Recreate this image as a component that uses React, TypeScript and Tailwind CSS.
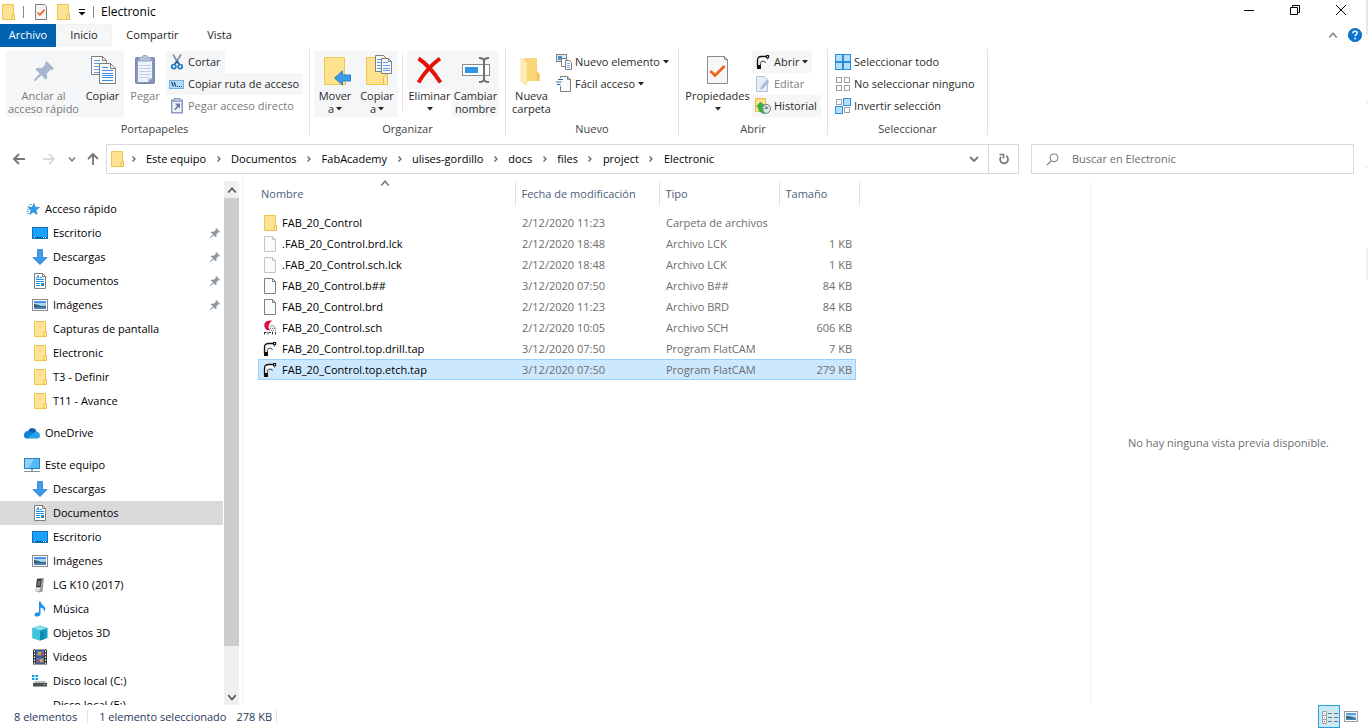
import React from "react";

type IconProps = { className?: string };

function FolderIcon({ className = "size-4" }: IconProps) {
  return (
    <svg viewBox="0 0 16 16" className={className} aria-hidden="true">
      <path d="M2.5.5h11v10h1v5h-12z" fill="#ffe394" stroke="#efc84a" />
      <path d="M12.5 10.5h2v5h-2.500v-4z" fill="#ffe9a8" stroke="#e9c046" />
    </svg>
  );
}

function PageIcon({ className = "size-4", stroke = "#808080" }: IconProps & { stroke?: string }) {
  return (
    <svg viewBox="0 0 16 16" className={className} aria-hidden="true">
      <path d="M2.5.5h8l3 3v12h-11z" fill="#fafafa" stroke={stroke} />
      <path d="M10.500.5v3h3" fill="none" stroke={stroke} />
    </svg>
  );
}

function CheckPageIcon({ className = "size-4" }: IconProps) {
  return (
    <svg viewBox="0 0 16 16" className={className} aria-hidden="true">
      <path d="M2.500.5h9l2 2v13h-11z" fill="#f5f5f5" stroke="#7f7f7f" />
      <path d="M4.500 8.500l2.300 2.300 4.700-5" fill="none" stroke="#f2641a" strokeWidth="1.700" />
    </svg>
  );
}

function PinIcon({ className = "size-3" }: IconProps) {
  return (
    <svg viewBox="0 0 16 16" className={className} aria-hidden="true">
      <path d="M10 0l6 6-1.600 1.200-1-.4-3.200 3.200.4 3.400-1.400 1.400-3.400-3.400L1.600 15.600 0 16l.4-1.600L4.600 10.200 1.200 6.800l1.400-1.400 3.400.4 3.200-3.200-.4-1z" fill="currentColor" />
    </svg>
  );
}

function CopyIcon() {
  return (
    <svg viewBox="0 0 32 32" className="size-8" aria-hidden="true">
      <path d="M4.500 1.500h11l4 4v14h-15z" fill="#fafafa" stroke="#7f7f7f" />
      <path d="M15.500 1.500v4h4" fill="none" stroke="#7f7f7f" />
      <path d="M7 5.500h6M7 8.500h10M7 11.500h5M7 14.500h5M7 17.500h5" stroke="#5a9ce8" />
      <path d="M12.500 8.500h11l5 5v15h-16z" fill="#fafafa" stroke="#7f7f7f" />
      <path d="M23.500 8.500v5h5" fill="none" stroke="#7f7f7f" />
      <path d="M15 12.500h6M15 15.500h11M15 18.500h11M15 20.500h11M15 22.500h11M15 25.500h11" stroke="#3a8ee6" />
    </svg>
  );
}

function PasteIcon() {
  return (
    <svg viewBox="0 0 32 32" className="size-8" aria-hidden="true">
      <rect x="6.500" y="2.500" width="19" height="26" rx="1" fill="#8794bb" stroke="#7a88b0" />
      <path d="M9 6h14v17l-4 4H9z" fill="#eef2fa" />
      <path d="M10 10.500h12M10 13.500h12M10 16.500h12M10 19.500h12M10 22.500h9" stroke="#c3cde4" />
      <path d="M10 6V2.500h3c0-3 6-3 6 0h3V6z" fill="#b6c1da" stroke="#93a0c2" />
      <path d="M19 27v-4h4z" fill="#b9c4de" />
    </svg>
  );
}

function ScissorsIcon() {
  return (
    <svg viewBox="0 0 16 16" className="size-4" aria-hidden="true">
      <path d="M4 .5l5.500 9M12 .5l-5.500 9" stroke="#8795a8" strokeWidth="1.800" />
      <path d="M8 7l2.500 3.500M8 7l-2.500 3.500" stroke="#1f5f9e" strokeWidth="1.500" />
      <circle cx="4.800" cy="12.600" r="2.100" fill="none" stroke="#1f78c0" strokeWidth="1.700" />
      <circle cx="11.200" cy="12.600" r="2.100" fill="none" stroke="#1f78c0" strokeWidth="1.700" />
    </svg>
  );
}

function PathIcon() {
  return (
    <svg viewBox="0 0 16 16" className="size-4" aria-hidden="true">
      <rect x=".5" y="4.500" width="14" height="8" fill="#b3dcfa" stroke="#74aede" />
      <path d="M2.500 6l2 4.500M5 6l2 4.500" stroke="#16406e" strokeWidth="1.200" />
      <path d="M8 10.500h1M10 10.500h1M12 10.500h1" stroke="#16406e" />
    </svg>
  );
}

function ShortcutIcon() {
  return (
    <svg viewBox="0 0 16 16" className="size-4" aria-hidden="true">
      <rect x="2" y="1.500" width="12" height="14" fill="#8c99be" />
      <rect x="3.500" y="3.500" width="9" height="10.500" fill="#eef2fa" />
      <path d="M5 .5h6v3H5z" fill="#b6c1da" stroke="#93a0c2" />
      <path d="M6 5.500h5v5L9.300 9l-2.800 3.200-1.200-1.200L8 8z" fill="#6b7aa5" />
    </svg>
  );
}

function BigFolder() {
  return (
    <>
      <path d="M5.500 2.500h20v18h1v9h-21z" fill="#ffe28e" stroke="#eec84c" />
      <path d="M25.500 19.500h1v10h-4v-8z" fill="#fde9a9" stroke="#e9c046" />
    </>
  );
}

function MoveToIcon() {
  return (
    <svg viewBox="0 0 32 32" className="size-8" aria-hidden="true">
      <BigFolder />
      <path d="M15.500 23l8-7v4h8v6h-8v4z" fill="#3b9be8" stroke="#2c7ec8" />
    </svg>
  );
}

function CopyToIcon() {
  return (
    <svg viewBox="0 0 32 32" className="size-8" aria-hidden="true">
      <BigFolder />
      <path d="M14.500.5h8l3 3v13h-11z" fill="#fafafa" stroke="#7f7f7f" />
      <path d="M20.500 3.500h7l3 3v12h-10z" fill="#fafafa" stroke="#7f7f7f" />
      <path d="M27.500 3.500v3h3" fill="none" stroke="#7f7f7f" />
      <path d="M16 4.500h4M16 7.500h4M16 10.500h4M16 13.500h4M22 7.500h5M22 10.500h7M22 13.500h7M22 15.500h7" stroke="#5a9ce8" />
    </svg>
  );
}

function DeleteIcon() {
  return (
    <svg viewBox="0 0 32 32" className="size-8" aria-hidden="true">
      <path d="M4.500 3.500Q16 11 26.500 27.500M26 3.500Q13 13 4.500 27.500" fill="none" stroke="#e3120b" strokeWidth="4" />
    </svg>
  );
}

function RenameIcon() {
  return (
    <svg viewBox="0 0 32 32" className="size-8" aria-hidden="true">
      <rect x="2.500" y="9.500" width="27" height="11" fill="#fff" stroke="#8a8a8a" />
      <rect x="5" y="12" width="13" height="6" fill="#3195e6" />
      <path d="M24 5v21" stroke="#707070" strokeWidth="2" />
      <path d="M19 3q5 0 5 3 0-3 5-3M19 27q5 0 5-3 0 3 5 3" fill="none" stroke="#707070" strokeWidth="2" />
    </svg>
  );
}

function NewFolderIcon() {
  return (
    <svg viewBox="0 0 32 32" className="size-8" aria-hidden="true">
      <path d="M8 3h13v13l2.500 2.500V26H8z" fill="#f8d679" />
      <path d="M20.500 17.500l3 1.500v7h-3z" fill="#f2c65c" />
      <path d="M5 3l6 4.500V29l-1 1-5-4z" fill="#ffebb0" stroke="#f3d686" strokeWidth=".6" />
    </svg>
  );
}

function NewItemIcon() {
  return (
    <svg viewBox="0 0 16 16" className="size-4" aria-hidden="true">
      <rect x=".5" y=".5" width="10" height="7" fill="#d8ebf8" stroke="#7f7f7f" />
      <path d="M2 2h4v4H2z" fill="#4d93c9" />
      <path d="M5.500 4.500h5v8h-5z" fill="#fff" stroke="#7f7f7f" />
      <path d="M9.500 6.500h4l2 2v7h-6z" fill="#fafafa" stroke="#7f7f7f" />
      <path d="M11 9.500h3M11 11.500h3M11 13.500h3" stroke="#7db1e6" />
    </svg>
  );
}

function EasyAccessIcon() {
  return (
    <svg viewBox="0 0 16 16" className="size-4" aria-hidden="true">
      <path d="M4.500.5h7l3 3v12h-10z" fill="#fafafa" stroke="#7f7f7f" />
      <path d="M11.500.5v3h3" fill="none" stroke="#7f7f7f" />
      <path d="M3 2h3v8H3z" fill="#fff" />
      <path d="M2 3.500h5M0 6h5.500M1 8.500h3.500" stroke="#1f6fb8" strokeWidth="1.200" />
    </svg>
  );
}

function PropertiesIcon() {
  return (
    <svg viewBox="0 0 32 32" className="size-8" aria-hidden="true">
      <path d="M5.500 1.500h17l3 3v24h-20z" fill="#f7f7f7" stroke="#8a8a8a" />
      <path d="M22.500 1.500v3h3" fill="none" stroke="#8a8a8a" />
      <path d="M8.500 16l4.500 4.500L22.500 11" fill="none" stroke="#f2641a" strokeWidth="2.800" />
    </svg>
  );
}

function FlatcamIcon() {
  return (
    <svg viewBox="0 0 16 16" className="size-4" aria-hidden="true">
      <path d="M3 5q.5-2 3-2.500h5V6L8 6 5.500 8v4H3z" fill="#fff" />
      <path d="M2.500 13V6q0-3.500 4-3.500H12" fill="none" stroke="#111" strokeWidth="1.300" />
      <path d="M5.500 12V9.500q0-2.500 2.500-2.500 2 0 2.500 2" fill="none" stroke="#444" />
      <path d="M4 6v5" stroke="#c4c4c4" />
      <path d="M2 11h4v4H2z" fill="#111" />
      <path d="M11.600 1.500h2v2.200h-2z" fill="#fff" stroke="#111" strokeWidth="1.100" />
      <path d="M12.500 4v1.500" stroke="#555" />
    </svg>
  );
}

function EditIcon() {
  return (
    <svg viewBox="0 0 16 16" className="size-4" aria-hidden="true">
      <path d="M1.500.5h8l3 3v12h-11z" fill="#e8eef8" stroke="#b2c0da" />
      <path d="M5 14l1-3.500 6-7 2.500 2-6.500 7z" fill="#a8bddb" />
    </svg>
  );
}

function HistoryIcon() {
  return (
    <svg viewBox="0 0 16 16" className="size-4" aria-hidden="true">
      <path d="M.5.500h10v13H.5z" fill="#ffe28e" stroke="#e9c046" />
      <circle cx="11" cy="10.800" r="4.500" fill="#e6e6e6" stroke="#7c7c7c" />
      <path d="M11 8v3l2-1.500M8.500 10.500h1" fill="none" stroke="#555" />
      <path d="M1.500 8.500L5.500 4l4 4H7.500q-.5 4 2.500 7.500Q3 15 3.200 8.500z" fill="#35b34a" stroke="#1f8a35" strokeWidth=".5" />
    </svg>
  );
}

function SelectIcon({ on }: { on: [boolean, boolean, boolean, boolean] }) {
  const cells = [[0, 0], [1, 0], [0, 1], [1, 1]];
  return (
    <svg viewBox="0 0 16 16" className="size-4" aria-hidden="true">
      {cells.map(([cx, cy], i) => {
        const big = on[i];
        return (
          <rect
            key={i}
            x={cx * 8 + (big ? 0.5 : 1.5)}
            y={cy * 8 + (big ? 0.5 : 1.5)}
            width={big ? 7 : 5}
            height={big ? 7 : 5}
            fill={big ? "#b5defa" : "#fff"}
            stroke={big ? "#2a8ee0" : "#a0a0a0"}
          />
        );
      })}
    </svg>
  );
}

function StarIcon() {
  return (
    <svg viewBox="0 0 16 16" className="size-4" aria-hidden="true">
      <path d="M10 2.500l1.200 3.800 4.300.2-3.500 2.500 1.100 4.500-3.600-2.500-3.800 2.500 1.500-4.500L4 6.500l4.200-.2z" fill="#2d9be8" stroke="#1c7fc9" strokeWidth=".6" />
      <path d="M5 3.500h3M3.500 5.500h2M3 8.500h2.500M2 10.500h3M3 12.500h2" stroke="#72bdf0" />
    </svg>
  );
}

function DesktopIcon() {
  return (
    <svg viewBox="0 0 16 16" className="size-4" aria-hidden="true">
      <rect x=".5" y="2.500" width="15" height="11" fill="#1ba1fb" stroke="#1273bd" />
      <path d="M1 12.500h14" stroke="#0b5d9e" />
      <path d="M2 12.500h1M11 12.500h1M13 12.500h1" stroke="#fff" />
    </svg>
  );
}

function DownloadIcon() {
  return (
    <svg viewBox="0 0 16 16" className="size-4" aria-hidden="true">
      <path d="M5.500.5h5v8h4.700L8 15.500.8 8.500h4.700z" fill="#3f9be9" stroke="#2b7ccb" strokeWidth=".8" />
    </svg>
  );
}

function DocumentIcon() {
  return (
    <svg viewBox="0 0 16 16" className="size-4" aria-hidden="true">
      <path d="M2.500.5h8l3 3v12h-11z" fill="#fdfdfd" stroke="#7d7d7d" />
      <path d="M10.500.5v3h3" fill="none" stroke="#7d7d7d" />
      <path d="M4.500 5.500L6 2.500l1 3" fill="none" stroke="#0a8fe6" />
      <path d="M8 4.500h2M4 6.500h8M4 8.500h8M4 10.500h4M4 12.500h4" stroke="#1a97e8" />
      <path d="M9 10h3v3H9z" fill="#2d86c4" />
    </svg>
  );
}

function PictureIcon() {
  return (
    <svg viewBox="0 0 16 16" className="size-4" aria-hidden="true">
      <rect x=".5" y="2.500" width="15" height="11" fill="#fff" stroke="#8c8c8c" />
      <path d="M2 4h12v8H2z" fill="#a6d2f5" />
      <path d="M2 4h12v2H2z" fill="#4c93e8" />
      <path d="M2 7q4 .5 7 2h5v1H2z" fill="#2f6468" />
      <path d="M2 10h12v2H2z" fill="#4a86ba" />
    </svg>
  );
}

function CloudIcon() {
  return (
    <svg viewBox="0 0 16 16" className="size-4" aria-hidden="true">
      <path d="M4 6q2-4 6-2.500 2 .6 2.500 3L9 9z" fill="#0a5eb5" />
      <path d="M0 10.500q0-4.300 4.200-4.500 2-.2 4 1.300L12 9l-8 4.500H3q-3 0-3-3z" fill="#1380d8" />
      <path d="M3 13.500L10.500 7.500Q12 6 14 7q2 1.200 2 3.500 0 3-3 3z" fill="#28a0ea" />
    </svg>
  );
}

function ComputerIcon() {
  return (
    <svg viewBox="0 0 16 16" className="size-4" aria-hidden="true">
      <rect x=".5" y="1.500" width="15" height="10" fill="#54b9f7" stroke="#2e7fb8" />
      <path d="M1 2h9L5 11H1z" fill="#8ad2fb" />
      <path d="M7 12h2v2H7z" fill="#89a9bd" />
      <path d="M0 14.500h16" stroke="#7994a6" />
    </svg>
  );
}

function PhoneIcon() {
  return (
    <svg viewBox="0 0 16 16" className="size-4" aria-hidden="true">
      <path d="M5 1.500L12 1l-1.500 13.500-3 1L3.500 14z" fill="#9c9c9c" />
      <path d="M5 2l4.800-.3L8.500 10H4.200z" fill="#3c3c3c" />
      <path d="M6 4l2.500-.2L8 8.500H5.200z" fill="#777" />
      <path d="M4 10.800h4l-.6 3.400-3-.6z" fill="#e6e6e6" />
    </svg>
  );
}

function MusicIcon() {
  return (
    <svg viewBox="0 0 16 16" className="size-4" aria-hidden="true">
      <path d="M7 .5h1.500q.5 2.500 3 4.200 3 2.500 1 6.300.4-3-4-4.500V13q-.5 2.500-3.500 2.500-2.800 0-2.500-2 .5-2.300 4.500-2.200z" fill="#1c93ea" />
    </svg>
  );
}

function CubeIcon() {
  return (
    <svg viewBox="0 0 16 16" className="size-4" aria-hidden="true">
      <path d="M8 .5l7.500 2.500v10L8 15.500.5 13V3z" fill="#1a9cc2" />
      <path d="M8 .5L15.500 3 8 5.500.5 3z" fill="#83e2ec" />
      <path d="M.5 3L8 5.500v10L.5 13z" fill="#3cc5da" />
      <path d="M8 5.500l4.500 3v5.500L8 15.500z" fill="#128bb4" />
    </svg>
  );
}

function VideoIcon() {
  return (
    <svg viewBox="0 0 16 16" className="size-4" aria-hidden="true">
      <path d="M1 .5h14v15H1z" fill="#3b3b3b" />
      <path d="M4 1.500h8v6H4zM4 8.500h8v6H4z" fill="#4878c6" />
      <path d="M6 3h3v3H6zM8 10h3v3H8z" fill="#e3a03a" />
      <path d="M9 4h2v3H9zM5 11h2v3H5z" fill="#c74438" />
      <path d="M2.500 1.500v14M13.500 1.500v14" stroke="#f3f3f3" strokeDasharray="1.500 1.500" />
    </svg>
  );
}

function DriveIcon({ system = true }: { system?: boolean }) {
  return (
    <svg viewBox="0 0 16 16" className="size-4" aria-hidden="true">
      {system && <path d="M0 2h2.500v2H0zM3.500 2H6v2H3.500zM0 5h2.500v2H0zM3.500 5H6v2H3.500z" fill="#17a0e8" />}
      <path d="M3 8h10l1.500 2.500H1.500z" fill="#bdbdbd" />
      <path d="M1 10h14v3.500H1z" fill="#4b4f52" />
      <path d="M11.500 11.500h2" stroke="#5fe06a" />
    </svg>
  );
}

function EagleIcon() {
  return (
    <svg viewBox="0 0 16 16" className="size-4" aria-hidden="true">
      <path d="M10 .5Q4 0 2.500 3.500 1.500 7.500 5 10L8 10.500Q6 8 6.500 5.500 7.500 3 10 .5z" fill="#dc0f38" />
      <path d="M7 6.500q3-2 5.500 0l1.200 3" fill="none" stroke="#9c9c9c" />
      <path d="M8 8.500h5M9 10.500h5" stroke="#7b7b7b" strokeDasharray="1 1" />
      <path d="M2.500 12v2.500M3 12.500h1.500M6 12v2.500M7 12.500h2M10.500 11.500v3M13.500 12v2.500" stroke="#333" />
    </svg>
  );
}

function Chevron({ dir, className = "size-2" }: { dir: "up" | "down" | "right"; className?: string }) {
  const d = { up: "M1 6l3-3.500L7 6", down: "M1 2.500L4 6l3-3.500", right: "M2.500 1.500L5 4 2.500 6.500" }[dir];
  return (
    <svg viewBox="0 0 8 8" className={className} aria-hidden="true">
      <path d={d} fill="none" stroke="currentColor" strokeWidth="1.300" />
    </svg>
  );
}

function Caret() {
  return (
    <svg viewBox="0 0 6 4" className="inline-block h-1 w-1.5 shrink-0 text-[#222]" aria-hidden="true">
      <path d="M0 0h6L3 3.500z" fill="currentColor" />
    </svg>
  );
}

function BigButton({
  icon, lines, className, disabled, caret,
}: { icon: React.ReactNode; lines: string[]; className: string; disabled?: boolean; caret?: boolean }) {
  return (
    <button
      type="button"
      disabled={disabled}
      className={`flex h-[66px] shrink-0 flex-col items-center whitespace-nowrap pt-1 leading-[13px] ${disabled ? "text-[#7c7c7c]" : "text-[#2b2b2b]"} ${className}`}
    >
      <span className="mb-0.5 block">{icon}</span>
      {lines.map((line, i) => (
        <span key={i} className="flex h-[13px] items-center gap-0.5">
          {line}
          {caret && i === lines.length - 1 && <Caret />}
        </span>
      ))}
    </button>
  );
}

function SmallButton({
  icon, label, active, disabled, caret,
}: { icon: React.ReactNode; label: string; active?: boolean; disabled?: boolean; caret?: boolean }) {
  return (
    <button
      type="button"
      disabled={disabled}
      className={`flex h-[22px] items-center gap-[3px] whitespace-nowrap pl-[3px] pr-1 ${active ? "bg-[#f5f6f7]" : ""} ${disabled ? "text-[#7c7c7c]" : "text-[#2b2b2b]"}`}
    >
      {icon}
      {label}
      {caret && <span className="flex items-center"><Caret /></span>}
    </button>
  );
}

function Group({ label, className, children }: { label: string; className: string; children: React.ReactNode }) {
  return (
    <section aria-label={label} className={`flex h-[86px] shrink-0 flex-col border-r border-[#e2e3e4] pt-0.5 ${className}`}>
      <div className="flex h-[66px] pl-1">{children}</div>
      <div className="mt-1 text-center leading-4 text-[#444]">{label}</div>
    </section>
  );
}

type Node = { label: string; icon: React.ReactNode; root?: boolean; pin?: boolean; selected?: boolean };

const tree: Node[][] = [
  [
    { label: "Acceso rápido", icon: <StarIcon />, root: true },
    { label: "Escritorio", icon: <DesktopIcon />, pin: true },
    { label: "Descargas", icon: <DownloadIcon />, pin: true },
    { label: "Documentos", icon: <DocumentIcon />, pin: true },
    { label: "Imágenes", icon: <PictureIcon />, pin: true },
    { label: "Capturas de pantalla", icon: <FolderIcon /> },
    { label: "Electronic", icon: <FolderIcon /> },
    { label: "T3 - Definir", icon: <FolderIcon /> },
    { label: "T11 - Avance", icon: <FolderIcon /> },
  ],
  [{ label: "OneDrive", icon: <CloudIcon />, root: true }],
  [
    { label: "Este equipo", icon: <ComputerIcon />, root: true },
    { label: "Descargas", icon: <DownloadIcon /> },
    { label: "Documentos", icon: <DocumentIcon />, selected: true },
    { label: "Escritorio", icon: <DesktopIcon /> },
    { label: "Imágenes", icon: <PictureIcon /> },
    { label: "LG K10 (2017)", icon: <PhoneIcon /> },
    { label: "Música", icon: <MusicIcon /> },
    { label: "Objetos 3D", icon: <CubeIcon /> },
    { label: "Videos", icon: <VideoIcon /> },
    { label: "Disco local (C:)", icon: <DriveIcon /> },
    { label: "Disco local (E:)", icon: <DriveIcon system={false} /> },
  ],
];

const files = [
  { name: "FAB_20_Control", date: "2/12/2020 11:23", type: "Carpeta de archivos", size: "", icon: <FolderIcon /> },
  { name: ".FAB_20_Control.brd.lck", date: "2/12/2020 18:48", type: "Archivo LCK", size: "1 KB", icon: <PageIcon stroke="#c4c4c4" /> },
  { name: ".FAB_20_Control.sch.lck", date: "2/12/2020 18:48", type: "Archivo LCK", size: "1 KB", icon: <PageIcon stroke="#c4c4c4" /> },
  { name: "FAB_20_Control.b##", date: "3/12/2020 07:50", type: "Archivo B##", size: "84 KB", icon: <PageIcon /> },
  { name: "FAB_20_Control.brd", date: "2/12/2020 11:23", type: "Archivo BRD", size: "84 KB", icon: <PageIcon /> },
  { name: "FAB_20_Control.sch", date: "2/12/2020 10:05", type: "Archivo SCH", size: "606 KB", icon: <EagleIcon /> },
  { name: "FAB_20_Control.top.drill.tap", date: "3/12/2020 07:50", type: "Program FlatCAM", size: "7 KB", icon: <FlatcamIcon /> },
  { name: "FAB_20_Control.top.etch.tap", date: "3/12/2020 07:50", type: "Program FlatCAM", size: "279 KB", icon: <FlatcamIcon />, selected: true },
];

const crumbs = ["Este equipo", "Documentos", "FabAcademy", "ulises-gordillo", "docs", "files", "project", "Electronic"];

function TitleBar() {
  return (
    <header className="flex h-6 shrink-0 items-center text-black">
      <FolderIcon />
      <span className="ml-[7px] h-3 w-px bg-[#8a8a8a]" />
      <button type="button" aria-label="Propiedades" className="ml-[9px]"><CheckPageIcon /></button>
      <button type="button" aria-label="Nueva carpeta" className="ml-1.5"><FolderIcon /></button>
      <button type="button" aria-label="Personalizar barra" className="ml-[7px]">
        <svg viewBox="0 0 8 8" className="size-2" aria-hidden="true">
          <path d="M1 1.500h6" stroke="#111" />
          <path d="M.5 4h7L4 7.500z" fill="#111" />
        </svg>
      </button>
      <span className="ml-[7px] h-3 w-px bg-[#8a8a8a]" />
      <h1 className="ml-[7px] text-xs">Electronic</h1>
      <div className="ml-auto mr-0.5 flex items-start self-stretch">
        <button type="button" aria-label="Minimizar" className="flex h-5 w-[46px] items-center justify-center">
          <svg viewBox="0 0 10 10" className="size-2.5" aria-hidden="true"><path d="M0 5.500h10" stroke="#000" /></svg>
        </button>
        <button type="button" aria-label="Restaurar" className="flex h-5 w-[46px] items-center justify-center">
          <svg viewBox="0 0 10 10" className="size-2.5" aria-hidden="true">
            <path d="M.5 2.500h7v7h-7zM2.500 2.500v-2h7v7h-2" fill="none" stroke="#000" />
          </svg>
        </button>
        <button type="button" aria-label="Cerrar" className="flex h-5 w-[46px] items-center justify-center">
          <svg viewBox="0 0 10 10" className="size-2.5" aria-hidden="true"><path d="M0 0l10 10M10 0L0 10" stroke="#000" /></svg>
        </button>
      </div>
    </header>
  );
}

function Tabs() {
  return (
    <nav className="flex h-[23px] shrink-0 items-stretch text-[#222]">
      <button type="button" className="w-14 bg-[#0063b1] pb-0.5 text-white">Archivo</button>
      <button type="button" className="w-14 border-x border-t border-[#f0f1f2] bg-[#f5f6f7] pb-0.5">Inicio</button>
      <button type="button" className="w-[81px] pb-0.5">Compartir</button>
      <button type="button" className="w-[53px] pb-0.5">Vista</button>
      <div className="ml-auto flex items-center gap-2.5 pb-0.5 pr-1">
        <button type="button" aria-label="Minimizar la cinta" className="text-[#8a8a8a]"><Chevron dir="up" className="size-2.5" /></button>
        <button type="button" aria-label="Ayuda">
          <svg viewBox="0 0 14 14" className="size-3.5" aria-hidden="true">
            <circle cx="7" cy="7" r="6.600" fill="#0a76d3" stroke="#0a5aa5" strokeWidth=".8" />
            <path d="M4.800 5.300q.1-2 2.200-2t2.200 1.700q0 1-1.200 1.700-.9.500-.9 1.600" fill="none" stroke="#fff" strokeWidth="1.500" />
            <path d="M6.200 9.700h1.700v1.500H6.200z" fill="#fff" />
          </svg>
        </button>
      </div>
    </nav>
  );
}

function Ribbon() {
  return (
    <div className="flex h-[97px] shrink-0 pt-0.5">
      <Group label="Portapapeles" className="w-[310px]">
        <BigButton icon={<span className="flex size-8 items-center justify-center text-[#a7b6cc]"><PinIcon className="size-5" /></span>} lines={["Anclar al", "acceso rápido"]} className="ml-0.5 w-[75px] bg-[#f5f6f7]" disabled />
        <BigButton icon={<CopyIcon />} lines={["Copiar"]} className="w-[43px] bg-[#f5f6f7]" />
        <BigButton icon={<PasteIcon />} lines={["Pegar"]} className="w-[42px]" disabled />
        <div className="flex flex-col items-start">
          <SmallButton icon={<ScissorsIcon />} label="Cortar" active />
          <SmallButton icon={<PathIcon />} label="Copiar ruta de acceso" active />
          <SmallButton icon={<ShortcutIcon />} label="Pegar acceso directo" disabled />
        </div>
      </Group>
      <Group label="Organizar" className="w-[196px]">
        <BigButton icon={<MoveToIcon />} lines={["Mover", "a"]} className="w-[42px] bg-[#f5f6f7]" caret />
        <BigButton icon={<CopyToIcon />} lines={["Copiar", "a"]} className="w-[42px] bg-[#f5f6f7]" caret />
        <span className="mx-1 mt-1 h-14 w-px shrink-0 bg-[#e2e3e4]" />
        <BigButton icon={<DeleteIcon />} lines={["Eliminar", ""]} className="w-[45px] bg-[linear-gradient(#f5f6f7_38px,transparent_38px)]" caret />
        <BigButton icon={<RenameIcon />} lines={["Cambiar", "nombre"]} className="w-[47px] bg-[#f5f6f7]" />
      </Group>
      <Group label="Nuevo" className="w-[173px]">
        <BigButton icon={<NewFolderIcon />} lines={["Nueva", "carpeta"]} className="w-[43px]" />
        <div className="flex flex-col items-start">
          <SmallButton icon={<NewItemIcon />} label="Nuevo elemento" caret />
          <SmallButton icon={<EasyAccessIcon />} label="Fácil acceso" caret />
        </div>
      </Group>
      <Group label="Abrir" className="w-[149px]">
        <BigButton icon={<PropertiesIcon />} lines={["Propiedades", ""]} className="w-[69px]" caret />
        <div className="flex flex-col items-start">
          <SmallButton icon={<FlatcamIcon />} label="Abrir" active caret />
          <SmallButton icon={<EditIcon />} label="Editar" disabled />
          <SmallButton icon={<HistoryIcon />} label="Historial" active />
        </div>
      </Group>
      <Group label="Seleccionar" className="w-[160px]">
        <div className="flex flex-col items-start">
          <SmallButton icon={<SelectIcon on={[true, true, true, true]} />} label="Seleccionar todo" />
          <SmallButton icon={<SelectIcon on={[false, false, false, false]} />} label="No seleccionar ninguno" />
          <SmallButton icon={<SelectIcon on={[false, true, true, false]} />} label="Invertir selección" />
        </div>
      </Group>
    </div>
  );
}

function Arrow({ dir }: { dir: "left" | "right" | "up" }) {
  const d = {
    left: "M13 7H2M7 2L2 7l5 5",
    right: "M1 7h11M7 2l5 5-5 5",
    up: "M7 13V2M2 7l5-5 5 5",
  }[dir];
  return (
    <svg viewBox="0 0 14 14" className="size-3.5" aria-hidden="true">
      <path d={d} fill="none" stroke="currentColor" strokeWidth={dir === "right" ? 1.3 : 1.8} />
    </svg>
  );
}

function AddressRow() {
  return (
    <div className="flex h-[30px] shrink-0 items-stretch pr-3">
      <div className="flex w-[106px] shrink-0 items-center pl-3 text-[#757575]">
        <button type="button" aria-label="Atrás"><Arrow dir="left" /></button>
        <button type="button" aria-label="Adelante" className="ml-4 text-[#d0d0d0]"><Arrow dir="right" /></button>
        <button type="button" aria-label="Recientes" className="ml-3"><Chevron dir="down" /></button>
        <button type="button" aria-label="Arriba" className="ml-2.5"><Arrow dir="up" /></button>
      </div>
      <div className="flex flex-1 items-center border border-[#d9d9d9]">
        <span className="-mr-1 ml-0.5"><FolderIcon /></span>
        <ol className="flex items-center text-black">
          {crumbs.map((c) => (
            <li key={c} className="flex items-center">
              <span className="flex w-[25px] justify-center text-[#666]"><Chevron dir="right" /></span>
              <a href="#" className="whitespace-nowrap">{c}</a>
            </li>
          ))}
        </ol>
        <button type="button" aria-label="Ubicaciones anteriores" className="ml-auto flex w-7 justify-center text-[#757575]">
          <svg viewBox="0 0 10 10" className="size-2.5" aria-hidden="true"><path d="M1 3l4 4 4-4" fill="none" stroke="currentColor" strokeWidth="1.800" /></svg>
        </button>
        <button type="button" aria-label="Actualizar" className="flex w-[30px] items-center justify-center self-stretch border-l border-[#d9d9d9] text-[#757575]">
          <svg viewBox="0 0 12 12" className="size-3" aria-hidden="true">
            <path d="M8.300 3A4 4 0 1 1 3 3.800" fill="none" stroke="currentColor" strokeWidth="1.700" />
            <path d="M1.500 1.500h4v4" fill="none" stroke="currentColor" strokeWidth="1.600" />
          </svg>
        </button>
      </div>
      <label className="ml-3 flex w-[323px] shrink-0 items-center border border-[#d9d9d9] pl-3.5">
        <svg viewBox="0 0 13 13" className="size-[13px] text-[#7b7b7b]" aria-hidden="true">
          <circle cx="8" cy="4.800" r="4" fill="none" stroke="currentColor" />
          <path d="M5 8L.8 12.200" stroke="currentColor" strokeWidth="1.200" />
        </svg>
        <input aria-label="Buscar en Electronic" placeholder="Buscar en Electronic" className="ml-[13px] min-w-0 flex-1 outline-none placeholder:text-[#6d6d6d]" />
      </label>
    </div>
  );
}

function Sidebar() {
  return (
    <aside className="flex w-[243px] shrink-0 border-r border-[#f3f3f3]">
      <ul className="min-w-0 flex-1 overflow-hidden pt-[23px] text-black">
        {tree.map((group, g) => (
          <li key={g} className="mb-2">
            <ul>
              {group.map((n) => (
                <li key={n.label}>
                  <a href="#" className={`flex h-6 items-center gap-[5px] whitespace-nowrap ${n.root ? "pl-6" : "pl-8"} ${n.selected ? "bg-[#d9d9d9]" : ""}`}>
                    {n.icon}
                    {n.label}
                    {n.pin && <span className="ml-auto mr-[3px] text-[#8e9aa5]"><PinIcon className="size-2.5" /></span>}
                  </a>
                </li>
              ))}
            </ul>
          </li>
        ))}
      </ul>
      <div className="ml-px mr-[3px] mt-[7px] flex w-[15px] flex-col items-center bg-[#f0f0f0] text-[#555]">
        <button type="button" aria-label="Subir" className="flex h-[17px] items-center"><Chevron dir="up" className="size-2.5" /></button>
        <span className="w-full flex-[448] bg-[#cdcdcd]" />
        <span className="flex-[42]" />
        <button type="button" aria-label="Bajar" className="flex h-[17px] items-center"><Chevron dir="down" className="size-2.5" /></button>
      </div>
    </aside>
  );
}

const cellBase = "flex h-[21px] items-center";

function FileTable() {
  return (
    <main className="min-w-0 flex-1 pl-[15px] pt-[7px]">
      <table className="w-[601px] table-fixed border-collapse text-left">
        <colgroup>
          <col className="w-[257px]" />
          <col className="w-36" />
          <col className="w-[120px]" />
          <col className="w-20" />
        </colgroup>
        <thead className="text-[#4c607a]">
          <tr>
            <th className="relative h-[25px] border-r border-[#e2e2e2] p-0 pl-[3px] font-normal">
              Nombre
              <span className="absolute left-[122px] top-[-3px] text-[#777]"><Chevron dir="up" className="size-2.5" /></span>
            </th>
            <th className="border-r border-[#e2e2e2] p-0 pl-1.5 font-normal">Fecha de modificación</th>
            <th className="border-r border-[#e2e2e2] p-0 pl-1.5 font-normal">Tipo</th>
            <th className="border-r border-[#e2e2e2] p-0 pl-1.5 font-normal">Tamaño</th>
          </tr>
          <tr aria-hidden="true"><td className="h-1.5 p-0" /></tr>
        </thead>
        <tbody className="text-[#6d6d6d]">
          {files.map((f) => {
            const sel = f.selected ? "border-y border-[#99d1ff] bg-[#cce8ff]" : "";
            return (
              <tr key={f.name} className="whitespace-nowrap">
                <td className="p-0">
                  <div className={`${cellBase} gap-1 text-black ${sel} ${f.selected ? "border-l pl-[3px]" : "pl-1"}`}>
                    {f.icon}
                    {f.name}
                  </div>
                </td>
                <td className="p-0"><div className={`${cellBase} pl-[7px] ${sel}`}>{f.date}</div></td>
                <td className="p-0"><div className={`${cellBase} pl-[7px] ${sel}`}>{f.type}</div></td>
                <td className="p-0">
                  <div className={`${cellBase} mr-[3px] justify-end ${sel} ${f.selected ? "border-r pr-[3px]" : "pr-1"}`}>{f.size}</div>
                </td>
              </tr>
            );
          })}
        </tbody>
      </table>
    </main>
  );
}

function StatusBar() {
  return (
    <footer className="flex h-[23px] shrink-0 items-center text-[#1e395b]">
      <span className="pl-3.5">8 elementos</span>
      <span className="ml-2.5 h-3.5 w-px bg-[#e4e4e4]" />
      <span className="ml-[11px]">1 elemento seleccionado</span>
      <span className="ml-2.5">278 KB</span>
      <span className="ml-1 h-3.5 w-px bg-[#e4e4e4]" />
      <button type="button" aria-label="Detalles" className="ml-auto flex h-[23px] w-[22px] items-center justify-center border border-[#26a0da] bg-[#cbe8f6]">
        <svg viewBox="0 0 17 14" className="h-3.5 w-[17px]" aria-hidden="true">
          <path d="M1.500 1.500h4v12h-4zM1.500 5.500h4M1.500 9.500h4" fill="#fff" stroke="#a0a0a0" />
          <path d="M3 3h1v1H3z" fill="#4a9a78" />
          <path d="M3 7h1v1H3z" fill="#4a90e0" />
          <path d="M3 11h1v1H3z" fill="#d2232a" />
          <path d="M7 3.500h4M13 3.500h4M7 7.500h4M13 7.500h4M7 11.500h4M13 11.500h4" stroke="#777" />
        </svg>
      </button>
      <button type="button" aria-label="Iconos grandes" className="ml-[3px] mr-[7px] flex w-4 justify-center">
        <svg viewBox="0 0 14 11" className="h-[11px] w-3.5" aria-hidden="true">
          <rect x=".5" y=".5" width="13" height="10" fill="#fff" stroke="#9a9a9a" />
          <path d="M2 2h10v7H2z" fill="#b4daf8" />
          <path d="M2 2h10v2H2z" fill="#5a9cf0" />
          <path d="M2 5q4 0 10 2v1H2z" fill="#2f6468" />
          <path d="M2 7.500h10V9H2z" fill="#4a86ba" />
        </svg>
      </button>
    </footer>
  );
}

export default function App() {
  return (
    <div className="flex h-screen overflow-hidden bg-white font-['Open_Sans','Noto_Sans',sans-serif] text-[11px] leading-4">
      <div className="flex min-w-0 flex-1 flex-col">
        <TitleBar />
        <Tabs />
        <Ribbon />
        <AddressRow />
        <div className="flex min-h-0 flex-1">
          <Sidebar />
          <FileTable />
          <section aria-label="Vista previa" className="mt-[7px] flex w-[276px] shrink-0 items-center justify-center border-l border-[#f3f3f3] text-[#6d6d6d]">
            No hay ninguna vista previa disponible.
          </section>
        </div>
        <StatusBar />
      </div>
      <div className="flex w-0.5 shrink-0 flex-col" aria-hidden="true">
        <span className="h-[34px] bg-[#e6e8ef]" />
        <span className="mt-[68px] h-px bg-[#dcdcdc]" />
        <span className="mt-16 h-px bg-[#e8e8e8]" />
        <span className="mt-20 h-8 bg-[#fbeeee]" />
      </div>
    </div>
  );
}
